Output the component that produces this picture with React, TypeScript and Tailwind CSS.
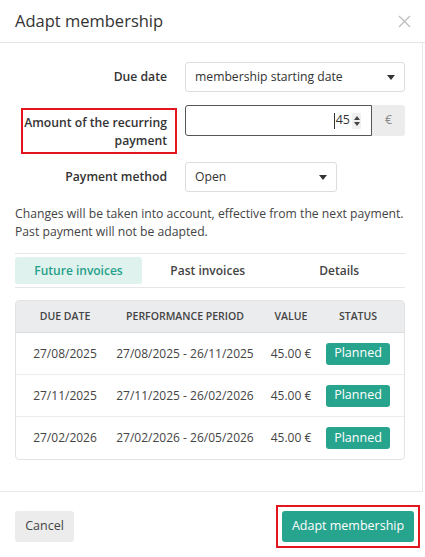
import React from "react";

const rows = [
  { due: "27/08/2025", period: "27/08/2025 - 26/11/2025", value: "45.00 €" },
  { due: "27/11/2025", period: "27/11/2025 - 26/02/2026", value: "45.00 €" },
  { due: "27/02/2026", period: "27/02/2026 - 26/05/2026", value: "45.00 €" },
];

function Caret() {
  return (
    <svg width="8" height="5" viewBox="0 0 8 5" className="text-[#333]">
      <path d="M0 0h8L4 5z" fill="currentColor" />
    </svg>
  );
}

export default function App() {
  return (
    <div
      className="w-[425px] h-[557px] bg-white text-[#333] overflow-hidden"
      style={{ fontFamily: '"Open Sans", "Noto Sans", sans-serif' }}
    >
      {/* header */}
      <div className="h-[43px] flex items-center justify-between pl-[15px] pr-[14px] border-b border-[#e5e5e5]">
        <h1 className="text-[16.5px] leading-none text-[#333]">Adapt membership</h1>
        <svg width="13" height="13" viewBox="0 0 13 13" className="text-[#bbb]">
          <path d="M1 1l11 11M12 1L1 12" stroke="currentColor" strokeWidth="1.2" />
        </svg>
      </div>

      {/* body */}
      <div className="w-[423px] h-[449px] border-r border-b border-[#e8e8e8] pl-[15px] pr-[17px] pt-[19px]">
        <div className="flex items-center h-[30px]">
          <div className="w-[152px] text-right text-[12.2px] font-semibold">Due date</div>
          <div className="ml-[18px] w-[220px] h-[30px] border border-[#ddd] rounded-[3px] flex items-center justify-between pl-[9px] pr-[9px] text-[12.2px]">
            <span>membership starting date</span>
            <Caret />
          </div>
        </div>

        <div className="flex items-start mt-[13px]">
          <div className="w-[170px] shrink-0 pt-[3px]">
            <div className="ml-[6px] w-[156px] h-[46px] border-2 border-[#e3161f] pr-[8px] pt-[4px] text-right text-[12.2px] font-semibold leading-[18px] whitespace-nowrap">
              Amount of the recurring
              <br />
              payment
            </div>
          </div>
          <div className="flex h-[31px] w-[220px]">
            <div className="flex-1 border border-[#555] rounded-l-[3px] flex items-center justify-end pr-[10px] text-[12.5px]">
              <span className="w-px h-[16px] bg-[#333] mr-[1px]" />
              <span>45</span>
              <span className="ml-[2px] w-[9px] h-[16px] bg-[#f0f0f0] flex flex-col items-center justify-center gap-[2px]">
                <svg width="6" height="4" viewBox="0 0 6 4"><path d="M0 4h6L3 0z" fill="#444" /></svg>
                <svg width="6" height="4" viewBox="0 0 6 4"><path d="M0 0h6L3 4z" fill="#444" /></svg>
              </span>
            </div>
            <div className="w-[33px] bg-[#ececec] rounded-r-[3px] flex items-center justify-center text-[12.5px] text-[#888]">
              €
            </div>
          </div>
        </div>

        <div className="flex items-center h-[30px] mt-[8px]">
          <div className="w-[152px] text-right text-[12.2px] font-semibold">Payment method</div>
          <div className="ml-[18px] w-[152px] h-[30px] border border-[#ddd] rounded-[3px] flex items-center justify-between pl-[9px] pr-[9px] text-[12.2px]">
            <span>Open</span>
            <Caret />
          </div>
        </div>

        <p className="mt-[13px] text-[12.2px] leading-[18px] text-[#444] whitespace-nowrap">
          Changes will be taken into account, effective from the next payment.
          <br />
          Past payment will not be adapted.
        </p>

        <div className="mt-[12px] border-t border-b border-[#e6e6e6] py-[3px] flex items-center text-[12px] font-semibold">
          <div className="w-[127px] h-[27px] rounded-[3px] bg-[#dff2ee] text-[#27a08a] flex items-center justify-center">
            Future invoices
          </div>
          <div className="flex-1 text-center text-[#444]">Past invoices</div>
          <div className="flex-1 text-center text-[#444]">Details</div>
        </div>

        <div className="mt-[12px] border border-[#e3e3e3] rounded-[4px] overflow-hidden">
          <div className="h-[32px] bg-[#ebecee] border-b border-[#dcdcdc] flex items-center text-[10.5px] font-semibold text-[#444] whitespace-nowrap">
            <div className="w-[98px] text-center">DUE DATE</div>
            <div className="w-[142px] text-center">PERFORMANCE PERIOD</div>
            <div className="w-[70px] text-center">VALUE</div>
            <div className="w-[64px] text-center">STATUS</div>
          </div>
          {rows.map((r, i) => (
            <div
              key={r.due}
              className={`h-[42px] flex items-center text-[12px] text-[#444] whitespace-nowrap ${i < rows.length - 1 ? "border-b border-[#ececec]" : ""}`}
            >
              <div className="w-[98px] text-center">{r.due}</div>
              <div className="w-[142px] text-center">{r.period}</div>
              <div className="w-[70px] text-center">{r.value}</div>
              <div className="w-[64px] flex justify-center">
                <span className="w-[64px] h-[22px] rounded-[3px] bg-[#27a48e] text-white text-[12.5px] flex items-center justify-center">
                  Planned
                </span>
              </div>
            </div>
          ))}
        </div>
      </div>

      {/* footer */}
      <div className="flex items-center justify-between pl-[15px] pr-[5px] pt-[13px]">
        <button className="w-[59px] h-[31px] rounded-[3px] bg-[#ececec] text-[12.5px] text-[#444]">
          Cancel
        </button>
        <div className="border-2 border-[#e3161f] p-[4px]">
          <button className="w-[132px] h-[31px] rounded-[3px] bg-[#27a48e] text-white text-[12.5px]">
            Adapt membership
          </button>
        </div>
      </div>
    </div>
  );
}
